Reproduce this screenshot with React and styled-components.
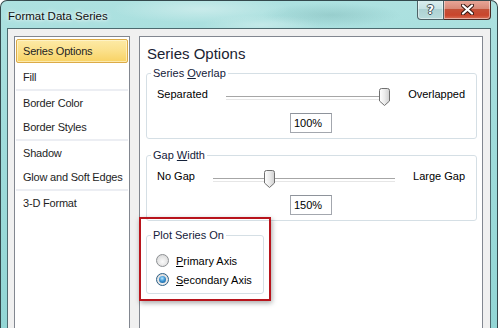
import React from 'react';
import styled, { createGlobalStyle } from 'styled-components';

const GlobalStyle = createGlobalStyle`
  html, body { margin: 0; padding: 0; background: #fff; }
  body { font-family: "Liberation Sans", Arial, sans-serif; font-size: 11px; color: #000; }
  #root { width: 498px; height: 328px; overflow: hidden; }
  * { box-sizing: border-box; }
`;

const Window = styled.div`
  width: 498px;
  height: 328px;
  overflow: hidden;
  display: flex;
  flex-direction: column;
  border: 1px solid #34494d;
  border-bottom: none;
  border-radius: 7px 7px 0 0;
  background:
    radial-gradient(ellipse 90px 14px at 200px 8px, rgba(255,255,255,0.35), transparent),
    radial-gradient(ellipse 70px 12px at 330px 14px, rgba(60,120,120,0.18), transparent),
    radial-gradient(ellipse 60px 10px at 260px 24px, rgba(255,255,255,0.3), transparent),
    linear-gradient(180deg, #ade1e0 0%, #a0dcdb 40%, #92d6d5 100%);
`;

const TitleBar = styled.div`
  height: 27px;
  flex: 0 0 auto;
  display: flex;
  justify-content: space-between;
  align-items: flex-start;
`;

const Title = styled.div`
  padding: 2px 0 0 7px;
  line-height: 27px;
  font-size: 11.5px;
  color: #111;
  text-shadow: 0 0 6px rgba(255,255,255,0.9), 0 0 3px rgba(255,255,255,0.9);
`;

const CaptionButtons = styled.div`
  display: flex;
  margin-top: -1px;
  margin-right: 6px;
`;

const CaptionButton = styled.div`
  height: 20px;
  width: ${p => (p.$close ? 47 : 27)}px;
  display: flex;
  align-items: center;
  justify-content: center;
  border: 1px solid ${p => (p.$close ? '#4a2a25' : '#4d6266')};
  border-top: none;
  ${p => (p.$close ? 'border-left: none;' : '')}
  border-radius: ${p => (p.$close ? '0 0 4px 0' : '0 0 0 4px')};
  background: ${p =>
    p.$close
      ? 'linear-gradient(180deg, #e9a99b 0%, #d98a78 45%, #c45037 50%, #c9452c 80%, #d87158 100%)'
      : 'linear-gradient(180deg, #dcefef 0%, #c7e3e4 45%, #aed2d3 50%, #b9dcdc 100%)'};
  box-shadow: inset 0 0 0 1px rgba(255,255,255,0.45);
`;

const HelpGlyph = styled.span`
  font-family: "DejaVu Sans", sans-serif;
  font-weight: bold;
  font-size: 12px;
  color: #fff;
  line-height: 1;
  text-shadow: 1px 0 0 #3c4f53, -1px 0 0 #3c4f53, 0 1px 0 #3c4f53, 0 -1px 0 #3c4f53;
`;

const Client = styled.div`
  flex: 0 0 auto;
  height: 330px;
  margin: 0 6px;
  border: 1px solid #4c6a6f;
  background: #f0f0f0;
  padding: 7px 7px 0 6px;
  display: flex;
  gap: 9px;
  align-items: stretch;
`;

const NavList = styled.div`
  width: 116px;
  flex: 0 0 auto;
  border: 1px solid #828790;
  background: #fff;
  padding: 2px 1px;
  display: flex;
  flex-direction: column;
`;

const NavItem = styled.div`
  height: 24px;
  line-height: 22px;
  padding-left: 6px;
  letter-spacing: -0.2px;
  color: #1e1e1e;
  white-space: nowrap;
  margin-bottom: ${p => (p.$selected ? 2 : 0)}px;
  border: 1px solid ${p => (p.$selected ? '#dcab47' : 'transparent')};
  border-radius: 2px;
  background: ${p =>
    p.$selected ? 'linear-gradient(180deg, #fdeaa6 0%, #fbe08a 50%, #f8d263 100%)' : 'transparent'};
  box-shadow: ${p => (p.$selected ? 'inset 0 0 0 1px rgba(255,248,220,0.6)' : 'none')};
`;

const NavSeparator = styled.div`
  height: 2px;
  background: #eceef3;
`;

const Content = styled.div`
  flex: 1;
  border: 1px solid #828790;
  background: #fff;
  padding: 7px 5px 0 6px;
  display: flex;
  flex-direction: column;
  align-items: stretch;
`;

const Heading = styled.div`
  font-size: 15px;
  line-height: 20px;
  margin: 0 0 2px 1px;
  color: #1a2332;
`;

const Group = styled.fieldset`
  margin: ${p => p.$top || 0}px 0 0;
  padding: 0;
  min-width: 0;
  width: ${p => (p.$width ? `${p.$width}px` : 'auto')};
  border: 1px solid #d5dfe5;
  border-radius: 3px;
`;

const Legend = styled.legend`
  margin-left: 4px;
  padding: 0 2px;
  line-height: 14px;
  font-size: 11px;
  color: #14213a;
`;

const GroupBody = styled.div`
  padding: ${p => p.$pad || '4px 11px 5px 10px'};
  display: flex;
  flex-direction: column;
`;

const SliderRow = styled.div`
  height: 20px;
  display: flex;
  align-items: center;
`;

const SliderTrack = styled.div`
  flex: 1;
  height: 20px;
  margin: 0 18px;
  position: relative;
  &::before {
    content: '';
    position: absolute;
    left: 0;
    right: 0;
    top: 12px;
    height: 2px;
    border-top: 1px solid #a6a6a6;
    border-bottom: 1px solid #e6e6e6;
  }
`;

const ThumbWrap = styled.div`
  position: absolute;
  top: 4px;
  width: 11px;
  height: 18px;
  display: flex;
`;

const ValueRow = styled.div`
  margin-top: 9px;
  display: flex;
  justify-content: center;
`;

const ValueBox = styled.input`
  width: 42px;
  height: 20px;
  border: 1px solid #a3a7ae;
  border-top-color: #8e939b;
  padding: 0 0 0 3px;
  font-family: inherit;
  font-size: 11px;
  color: #000;
  background: #fff;
  outline: none;
`;

const Highlight = styled.div`
  width: fit-content;
  margin: -4px 0 0 -7px;
  padding: 9px 5px 5px 5px;
  border: 2px solid #b8141c;
  box-shadow: 1px 2px 5px rgba(0,0,0,0.35);
`;

const RadioRow = styled.label`
  height: 19px;
  display: flex;
  align-items: center;
  gap: 7px;
  color: #000;
`;

const RadioCircle = styled.span`
  width: 13px;
  height: 13px;
  border-radius: 50%;
  border: 1px solid ${p => (p.$checked ? '#2c5f86' : '#8c8f92')};
  background: radial-gradient(circle at 50% 60%, #fbfbfb 0%, #e4e4e4 55%, #cfd0d1 100%);
  position: relative;
  flex: 0 0 auto;
  &::after {
    content: '';
    display: ${p => (p.$checked ? 'block' : 'none')};
    position: absolute;
    left: 2px;
    top: 2px;
    width: 7px;
    height: 7px;
    border-radius: 50%;
    background: radial-gradient(circle at 45% 35%, #b9e7ff 0%, #3c95d4 45%, #0d4f86 100%);
  }
`;

const U = styled.span`
  text-decoration: underline;
`;

function Thumb({ pct }) {
  return (
    <ThumbWrap style={{ left: `calc(${pct}% - ${(pct * 11) / 100}px)` }}>
      <svg width="11" height="18" viewBox="0 0 11 18">
        <defs>
          <linearGradient id={`tg${pct}`} x1="0" y1="0" x2="1" y2="0">
            <stop offset="0" stopColor="#ffffff" />
            <stop offset="0.5" stopColor="#ececec" />
            <stop offset="1" stopColor="#cfcfcf" />
          </linearGradient>
        </defs>
        <path
          d="M0.5 2.5 Q0.5 0.5 2.5 0.5 H8.5 Q10.5 0.5 10.5 2.5 V13 L5.5 17.5 L0.5 13 Z"
          fill={`url(#tg${pct})`}
          stroke="#707070"
          strokeWidth="1"
        />
      </svg>
    </ThumbWrap>
  );
}

function CloseGlyph() {
  return (
    <svg width="13" height="11" viewBox="0 0 13 11">
      <path d="M2 1.5 L11 9.5 M11 1.5 L2 9.5" stroke="#3a1a14" strokeWidth="4.2" strokeLinecap="round" />
      <path d="M2 1.5 L11 9.5 M11 1.5 L2 9.5" stroke="#fff" strokeWidth="2.2" strokeLinecap="round" />
    </svg>
  );
}

function SliderGroup({ legend, left, right, pct, value, top }) {
  return (
    <Group $top={top}>
      <Legend>{legend}</Legend>
      <GroupBody>
        <SliderRow>
          <span>{left}</span>
          <SliderTrack>
            <Thumb pct={pct} />
          </SliderTrack>
          <span>{right}</span>
        </SliderRow>
        <ValueRow>
          <ValueBox readOnly value={value} />
        </ValueRow>
      </GroupBody>
    </Group>
  );
}

const navItems = [
  { label: 'Series Options', selected: true },
  { label: 'Fill' },
  { sep: true },
  { label: 'Border Color' },
  { label: 'Border Styles' },
  { sep: true },
  { label: 'Shadow' },
  { label: 'Glow and Soft Edges' },
  { sep: true },
  { label: '3-D Format' },
];

export default function App() {
  return (
    <>
      <GlobalStyle />
      <Window>
        <TitleBar>
          <Title>Format Data Series</Title>
          <CaptionButtons>
            <CaptionButton>
              <HelpGlyph>?</HelpGlyph>
            </CaptionButton>
            <CaptionButton $close>
              <CloseGlyph />
            </CaptionButton>
          </CaptionButtons>
        </TitleBar>
        <Client>
          <NavList>
            {navItems.map((it, i) =>
              it.sep ? (
                <NavSeparator key={i} />
              ) : (
                <NavItem key={i} $selected={it.selected}>
                  {it.label}
                </NavItem>
              )
            )}
          </NavList>
          <Content>
            <Heading>Series Options</Heading>
            <SliderGroup
              legend={<>Series <U>O</U>verlap</>}
              left="Separated"
              right="Overlapped"
              pct={100}
              value="100%"
            />
            <SliderGroup
              legend={<>Gap <U>W</U>idth</>}
              left="No Gap"
              right="Large Gap"
              pct={30}
              value="150%"
              top={9}
            />
            <Highlight>
              <Group $width={118}>
                <Legend>Plot Series On</Legend>
                <GroupBody $pad="9px 4px 4px 9px">
                  <RadioRow>
                    <RadioCircle />
                    <span><U>P</U>rimary Axis</span>
                  </RadioRow>
                  <RadioRow>
                    <RadioCircle $checked />
                    <span><U>S</U>econdary Axis</span>
                  </RadioRow>
                </GroupBody>
              </Group>
            </Highlight>
          </Content>
        </Client>
      </Window>
    </>
  );
}
